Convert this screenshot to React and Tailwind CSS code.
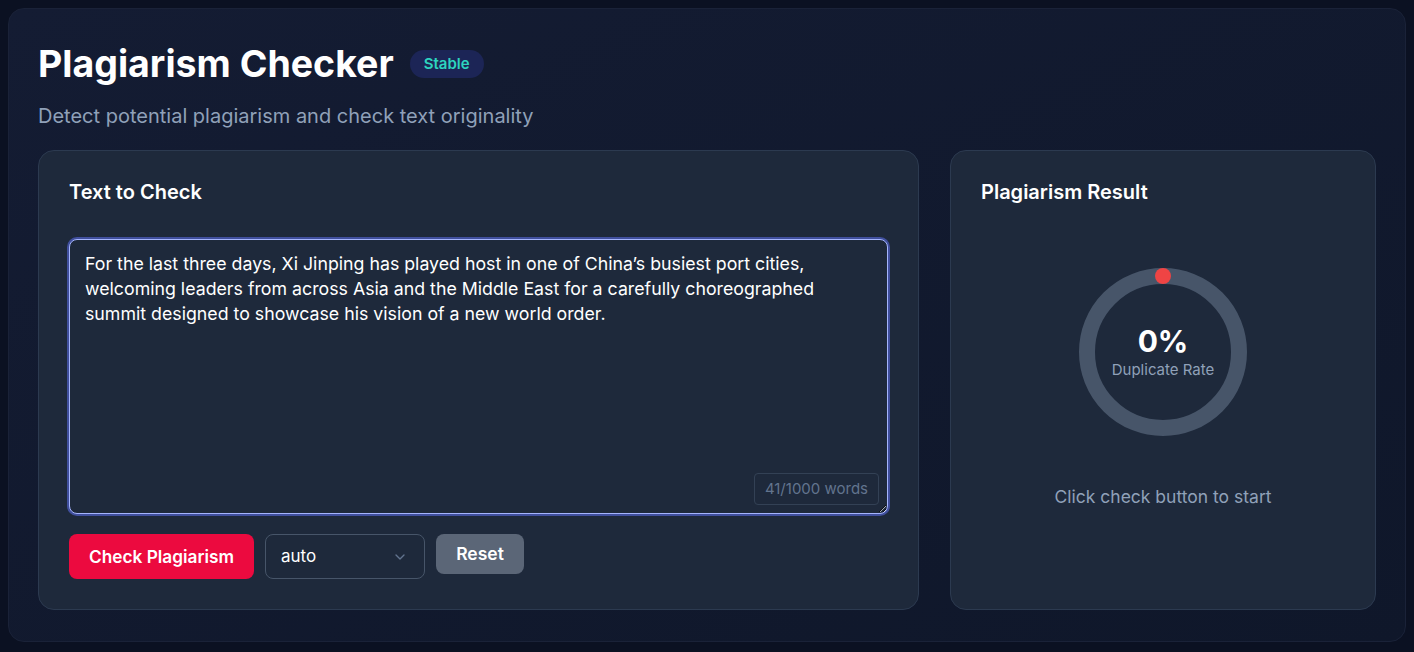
import { ChevronDown } from "lucide-react";

const sample =
  "For the last three days, Xi Jinping has played host in one of China\u2019s busiest port cities, welcoming leaders from across Asia and the Middle East for a carefully choreographed summit designed to showcase his vision of a new world order.";

function ResultRing() {
  return (
    <div className="relative w-[184px] h-[184px]">
      <svg width="184" height="184" viewBox="0 0 184 184" className="absolute inset-0">
        <circle cx="92" cy="92" r="76" fill="none" stroke="#475569" strokeWidth="16" />
        <circle cx="92" cy="16" r="8" fill="#ef4444" />
      </svg>
      <div className="absolute inset-0 flex flex-col items-center justify-center">
        <span className="text-[30px] leading-9 font-bold text-white">0%</span>
        <span className="text-[15px] text-slate-400">Duplicate Rate</span>
      </div>
    </div>
  );
}

export default function App() {
  return (
    <div
      className="min-h-screen bg-[#0b1122] p-2"
      style={{ fontFamily: "Inter, 'Noto Sans', sans-serif" }}
    >
      <div className="rounded-2xl bg-gradient-to-br from-[#141c33] to-[#0f172a] border border-[#1a2238] px-[29px] pt-[35px] pb-[31px]">
        <div className="flex items-center gap-[16px]">
          <h1 className="text-[37.5px] leading-10 font-bold text-white">Plagiarism Checker</h1>
          <span className="h-7 px-[14px] flex items-center rounded-full bg-[#1c2556] text-[#2dd4bf] text-[15px] font-semibold">
            Stable
          </span>
        </div>
        <p className="mt-[18px] text-xl leading-7 text-slate-400">Detect potential plagiarism and check text originality</p>

        <div className="mt-[20px] flex gap-[31px]">
          <section className="flex-1 rounded-2xl bg-[#1e293b] border border-[#2c3a50] p-[30px] pt-[27px]">
            <h2 className="text-xl font-semibold text-white">Text to Check</h2>
            <div className="relative mt-[33px]">
              <textarea
                defaultValue={sample}
                spellCheck={false}
                className="block w-full h-[275px] resize-y rounded-lg bg-[#1e293b] border border-[#a5b4fc] ring-2 ring-[#4f5fc7]/70 px-[15px] py-[11px] text-[17.75px] leading-[25px] text-white outline-none"
              />
              <span className="absolute right-[9px] bottom-[9px] rounded border border-[#334155] px-[10px] py-[4px] text-[15px] text-slate-500">
                41/1000 words
              </span>
            </div>
            <div className="mt-5 flex items-start gap-[11px]">
              <button className="h-[45px] px-5 rounded-lg bg-[#ec0a3f] text-white font-semibold text-[17.25px]">
                Check Plagiarism
              </button>
              <div className="relative w-[160px] h-[45px]">
                <select className="appearance-none w-full h-full rounded-lg bg-[#1e293b] border border-[#475569] pl-[15px] text-[17px] text-white outline-none">
                  <option>auto</option>
                </select>
                <ChevronDown className="absolute right-[17px] top-[15px] w-4 h-4 text-slate-500 pointer-events-none" strokeWidth={2} />
              </div>
              <button className="h-[40px] w-[88px] rounded-lg bg-[#5b6677] text-white font-semibold text-[17.5px]">
                Reset
              </button>
            </div>
          </section>

          <section className="w-[426px] rounded-2xl bg-[#1e293b] border border-[#2c3a50] p-[30px] pt-[27px] flex flex-col">
            <h2 className="text-xl font-semibold text-white">Plagiarism Result</h2>
            <div className="mt-[54px] flex justify-center">
              <ResultRing />
            </div>
            <p className="mt-[40px] text-center text-[17.5px] text-slate-400">Click check button to start</p>
          </section>
        </div>
      </div>
    </div>
  );
}
